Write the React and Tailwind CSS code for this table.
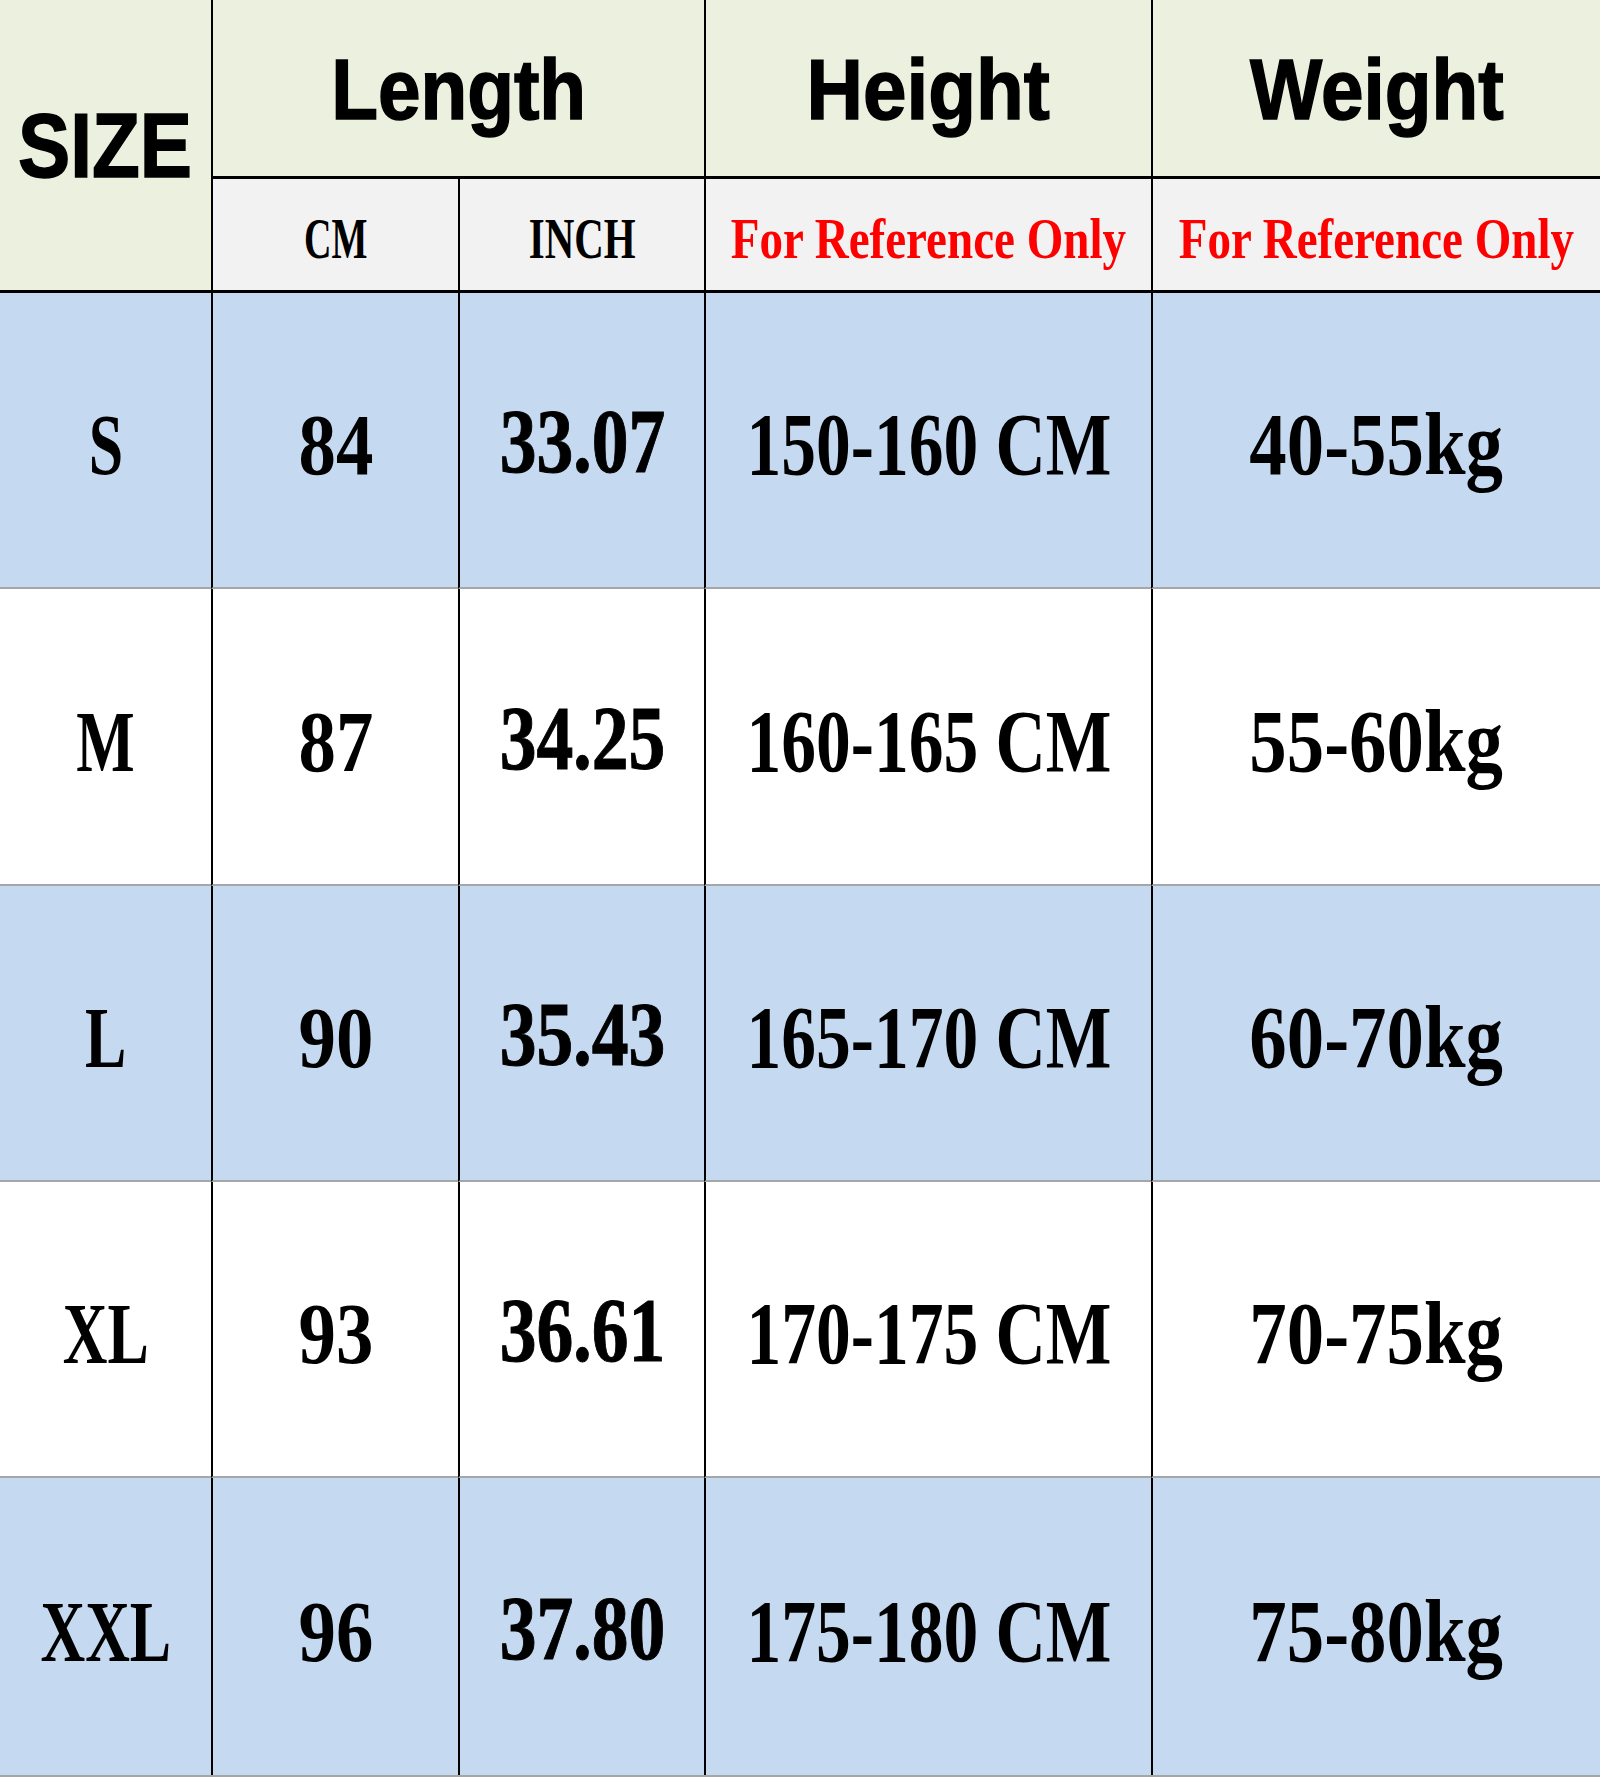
const rows = [
  { size: 'S', cm: '84', inch: '33.07', height: '150-160 CM', weight: '40-55kg' },
  { size: 'M', cm: '87', inch: '34.25', height: '160-165 CM', weight: '55-60kg' },
  { size: 'L', cm: '90', inch: '35.43', height: '165-170 CM', weight: '60-70kg' },
  { size: 'XL', cm: '93', inch: '36.61', height: '170-175 CM', weight: '70-75kg' },
  { size: 'XXL', cm: '96', inch: '37.80', height: '175-180 CM', weight: '75-80kg' },
];

const head = "font-['Liberation_Sans',Arial,sans-serif] font-bold leading-none text-black [-webkit-text-stroke:1.5px_#000]";
const serif = "font-['Liberation_Serif','Times_New_Roman',serif] font-bold leading-none";

const Cell = ({ className = '', children }) => (
  <div className={`flex items-center justify-center overflow-hidden ${className}`}>{children}</div>
);

export default function App() {
  return (
    <div className="w-[1600px] h-[1777px] bg-white text-black">
      <div className="grid grid-cols-[211px_247px_246px_447px_449px] grid-rows-[179px_114px_296px_297px_296px_296px_297px] border-b-2 border-[#a6a6a6]">
        {/* header */}
        <Cell className="row-span-2 bg-[#ebf1de] border-b-[3px] border-black pt-[2px]">
          <span className={`${head} inline-block text-[90px] scale-x-[0.87]`}>SIZE</span>
        </Cell>
        <Cell className="col-span-2 bg-[#ebf1de] border-l-2 border-b-[3px] border-black pt-[2px]">
          <span className={`${head} inline-block text-[85px] scale-x-[0.9]`}>Length</span>
        </Cell>
        <Cell className="bg-[#ebf1de] border-l-2 border-b-[3px] border-black pt-[2px]">
          <span className={`${head} inline-block text-[85px] scale-x-[0.92]`}>Height</span>
        </Cell>
        <Cell className="bg-[#ebf1de] border-l-2 border-b-[3px] border-black pt-[2px]">
          <span className={`${head} inline-block text-[85px] scale-x-[0.9]`}>Weight</span>
        </Cell>

        <Cell className="bg-[#f2f2f2] border-l-2 border-b-[3px] border-black pt-[8px]">
          <span className={`${serif} inline-block text-[56px] scale-x-[0.68]`}>CM</span>
        </Cell>
        <Cell className="bg-[#f2f2f2] border-l-2 border-b-[3px] border-black pt-[8px]">
          <span className={`${serif} inline-block text-[56px] scale-x-[0.73]`}>INCH</span>
        </Cell>
        <Cell className="bg-[#f2f2f2] border-l-2 border-b-[3px] border-black pt-[8px]">
          <span className={`${serif} inline-block text-[56px] scale-x-[0.84] text-[#ff0000] whitespace-nowrap`}>For Reference Only</span>
        </Cell>
        <Cell className="bg-[#f2f2f2] border-l-2 border-b-[3px] border-black pt-[8px]">
          <span className={`${serif} inline-block text-[56px] scale-x-[0.84] text-[#ff0000] whitespace-nowrap`}>For Reference Only</span>
        </Cell>

        {/* data rows */}
        {rows.map((r, i) => {
          const bg = i % 2 === 0 ? 'bg-[#c5d9f1]' : 'bg-white';
          const line = i < rows.length - 1 ? 'border-b-2 border-b-[#a6a6a6]' : '';
          return [
            <Cell key={`s${i}`} className={`${bg} ${line} pt-[10px]`}>
              <span className={`${serif} inline-block text-[86px] scale-x-[0.72]`}>{r.size}</span>
            </Cell>,
            <Cell key={`c${i}`} className={`${bg} ${line} border-l-2 border-l-black pt-[10px]`}>
              <span className={`${serif} inline-block text-[86px] scale-x-[0.87]`}>{r.cm}</span>
            </Cell>,
            <Cell key={`i${i}`} className={`${bg} ${line} border-l-2 border-l-black pt-[2px]`}>
              <span className={`${serif} inline-block text-[92px] scale-x-[0.8] [-webkit-text-stroke:1px_#000]`}>{r.inch}</span>
            </Cell>,
            <Cell key={`h${i}`} className={`${bg} ${line} border-l-2 border-l-black pt-[10px]`}>
              <span className={`${serif} inline-block text-[88px] scale-x-[0.79] whitespace-nowrap`}>{r.height}</span>
            </Cell>,
            <Cell key={`w${i}`} className={`${bg} ${line} border-l-2 border-l-black pt-[10px]`}>
              <span className={`${serif} inline-block text-[88px] scale-x-[0.85] whitespace-nowrap`}>{r.weight}</span>
            </Cell>,
          ];
        })}
      </div>
    </div>
  );
}
